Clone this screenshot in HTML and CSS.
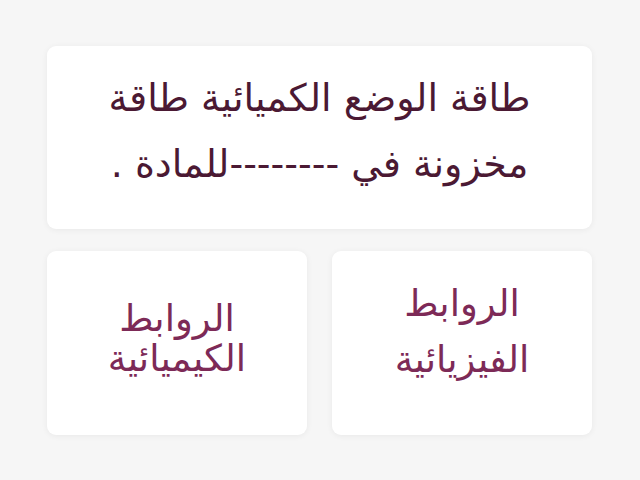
FILE: index.html
```html
<!DOCTYPE html>
<html lang="ar" dir="rtl">
<head>
<meta charset="utf-8">
<link rel="stylesheet" href="styles.css">
</head>
<body>
<main class="board">
  <section class="card question">
    <p class="q-text">طاقة الوضع الكميائية طاقة<br>مخزونة في --------للمادة .</p>
  </section>
  <div class="answers">
    <button class="card answer answer-phys">الروابط الفيزيائية</button>
    <button class="card answer answer-chem">الروابط الكيميائية</button>
  </div>
</main>
</body>
</html>
```

FILE: styles.css
```css
html, body {
  margin: 0;
  padding: 0;
  background: #f6f6f6;
}
body {
  width: 640px;
  height: 480px;
  font-family: "DejaVu Sans", sans-serif;
}
.board {
  padding: 46px 48px 0 47px;
  display: flex;
  flex-direction: column;
  gap: 22px;
}
.card {
  background: #ffffff;
  border-radius: 9px;
  box-shadow: 0 1px 6px rgba(0,0,0,0.06);
  border: none;
}
.question {
  height: 183px;
  box-sizing: border-box;
  padding-bottom: 14px;
  display: flex;
  align-items: center;
  justify-content: center;
}
.q-text {
  margin: 0;
  text-align: center;
  font-size: 38px;
  line-height: 66px;
  color: #4b1933;
  white-space: nowrap;
}
.answers {
  display: flex;
  gap: 25px;
}
.answer {
  flex: 1;
  height: 184px;
  padding: 0 30px;
  font-family: "DejaVu Sans", sans-serif;
  font-size: 37px;
  color: #7d2a57;
  text-align: center;
  cursor: pointer;
}
.answer-phys {
  line-height: 56px;
  padding-bottom: 22px;
}
.answer-chem {
  line-height: 40px;
  padding-bottom: 8px;
}
```
